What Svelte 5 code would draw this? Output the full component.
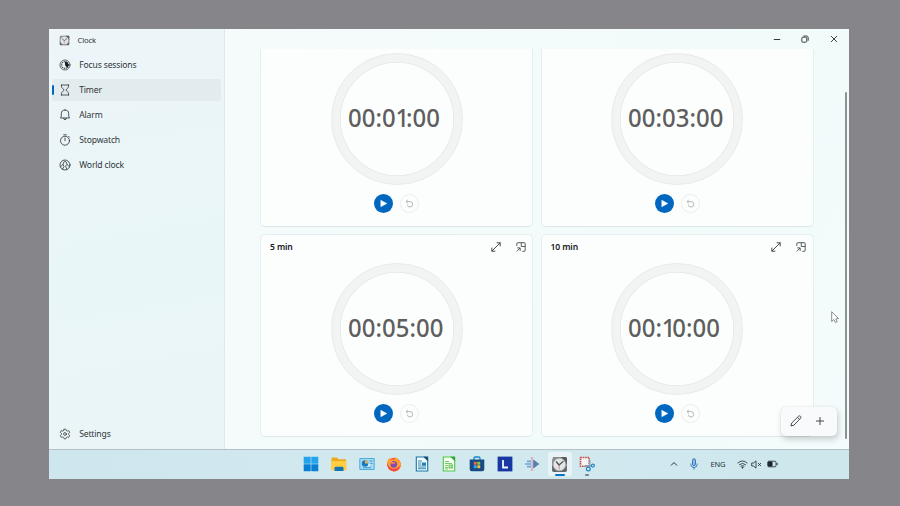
<script>
  const nav = [
    { id: 'focus', label: 'Focus sessions' },
    { id: 'timer', label: 'Timer', active: true },
    { id: 'alarm', label: 'Alarm' },
    { id: 'stopwatch', label: 'Stopwatch' },
    { id: 'world', label: 'World clock' }
  ];
  // The first row is scrolled under the title bar, so only its dials are visible.
  const timers = [
    { time: '00:01:00' },
    { time: '00:03:00' },
    { name: '5 min', time: '00:05:00' },
    { name: '10 min', time: '00:10:00' }
  ];
  const apps = ['start', 'files', 'panel', 'firefox', 'writer', 'calc', 'store', 'l', 'flow', 'clock', 'snip'];
</script>

{#snippet clockApp(size)}
  <svg width={size} height={size} viewBox="0 0 16 16" fill="none">
    <path d="M2 1h11.500q1.500 0 1.500 1.500V9H1V4z" fill="#85898c" />
    <path d="M9.500 1h4q1.500 0 1.500 1.500V8z" fill="#55595c" />
    <path d="M1 9h14v4.500q0 1.500-1.500 1.500h-11Q1 15 1 13.500z" fill="#62676b" />
    <circle cx="7.900" cy="8" r="5.900" fill="#e3e5e6" stroke="#a3a6a8" stroke-width=".8" />
    <path d="M4.800 5.200 7.600 8.500 11.700 4.800" stroke="#4c5154" stroke-width="1.200" />
    <path d="M7.700 8.300v4.300" stroke="#b98078" stroke-width=".8" />
  </svg>
{/snippet}

{#snippet navIcon(id)}
  <svg width="12" height="12" viewBox="0 0 12 12" fill="none" stroke="#30363a" stroke-width=".85" stroke-linecap="round" stroke-linejoin="round">
    {#if id === 'focus'}
      <circle cx="6" cy="6" r="5" stroke-width=".75" />
      <circle cx="6" cy="6" r="3.400" stroke-dasharray=".9 .9" stroke-linecap="butt" stroke-width="1.300" />
      <path d="M6 2.400A3.600 3.600 0 0 1 8 9L6 6z" fill="#1b2024" stroke="none" />
    {:else if id === 'timer'}
      <path d="M2.300 1h7.400M2.300 11h7.400M2.500 1v1.800c0 1.300 2.500 2.200 2.500 3.200S2.500 7.900 2.500 9.200V11M9.500 1v1.800C9.500 4.100 7 5 7 6s2.500 1.900 2.500 3.200V11" stroke-width=".8" />
    {:else if id === 'alarm'}
      <path d="M6 1a3.700 3.700 0 0 0-3.700 3.700v2.500L1.500 9h9l-.8-1.800V4.700A3.700 3.700 0 0 0 6 1zM4.700 9.200a1.300 1.500 0 0 0 2.600 0" />
    {:else if id === 'stopwatch'}
      <circle cx="6" cy="6.700" r="4.500" /><path d="M6 4v2.700M4.700.8h2.600M9.700 2.300l.7.700" />
    {:else if id === 'world'}
      <circle cx="6" cy="6" r="5" /><path d="M1.500 7.800 4 5.500 4.800 3q1.200-1.300 2.400 0L8 5.500l2.500 2.300M4 5.500l1 2-1.500 2.800M8 5.500 6.500 7l1.300 3.300" stroke-width=".8" />
    {:else}
      <path d="M5.100 1.200h1.800l.4 1.300 1.100.6 1.400-.4.900 1.600-1 1v1.400l1 1-.9 1.600-1.400-.4-1.100.6-.4 1.300H5.100l-.4-1.300-1.100-.6-1.400.4-.9-1.600 1-1V5.300l-1-1 .9-1.600 1.400.4 1.100-.6z" stroke-width=".75" />
      <circle cx="6" cy="6" r="1.400" stroke-width=".75" />
    {/if}
  </svg>
{/snippet}

<div class="screen">
  <div class="desktop">
    <div class="window">
      <aside>
        <div class="brand">{@render clockApp(11)}<span>Clock</span></div>
        <nav>
          {#each nav as item}
            <div class="item" class:active={item.active}>
              {@render navIcon(item.id)}<span>{item.label}</span>
            </div>
          {/each}
        </nav>
        <div class="item settings">{@render navIcon('settings')}<span>Settings</span></div>
      </aside>
      <main>
        <header>
          <svg width="8" height="8" viewBox="0 0 8 8"><path d="M.8 4.500h6.400" stroke="#33383b" stroke-width="1" /></svg>
          <svg width="8" height="8" viewBox="0 0 8 8" fill="none" stroke="#33383b" stroke-width=".95"><rect x=".8" y="2.200" width="5" height="5" rx="1" /><path d="M2.500 1h3c1 0 1.700.7 1.700 1.700v3" /></svg>
          <svg width="8" height="8" viewBox="0 0 8 8"><path d="M1 1l6 6M7 1 1 7" stroke="#33383b" stroke-width=".95" /></svg>
        </header>
        <div class="scroll">
          <div class="grid">
            {#each timers as t}
              <section class="card">
                <div class="top">
                  {#if t.name}
                    <h2>{t.name}</h2>
                    <svg width="10" height="10" viewBox="0 0 10 10" fill="none" stroke="#33383b" stroke-width=".9"><path d="M.8 9.200 9.200.8M5.700.8h3.500v3.500M4.300 9.200H.8V5.700" /></svg>
                    <svg width="10" height="10" viewBox="0 0 10 10" fill="none" stroke="#3c4144" stroke-width=".85"><path d="M.8 4V1.700Q.8.700 1.800.7h6.400q1 0 1 1v6.600q0 1-1 1H6.300M5.300.8v3.700h3.900M.7 9.400l3.300-3.300M1.200 5.900h3v3" /></svg>
                  {/if}
                </div>
                <div class="ring">
                  <div class="time">{#each t.time as ch}<span class:one={ch === '1'} class:colon={ch === ':'}>{ch}</span>{/each}</div>
                </div>
                <div class="actions">
                  <div class="play"><svg width="9" height="9" viewBox="0 0 9 9"><path d="M1.800 1.300v6.400L7.800 4.500z" fill="#fff" stroke="#fff" stroke-width=".5" stroke-linejoin="round" /></svg></div>
                  <div class="reset"><svg width="9" height="9" viewBox="0 0 9 9" fill="none" stroke="#a3a6a7" stroke-width=".8"><path d="M2.800.9 1 2.600l1.800 1.700M1.100 2.600h3.900a2.700 2.700 0 1 1-2.700 3.100" /></svg></div>
                </div>
              </section>
            {/each}
          </div>
        </div>
      </main>
      <div class="scrollbar"></div>
      <div class="fab">
        <svg width="12" height="12" viewBox="0 0 12 12" fill="none" stroke="#33383b" stroke-width=".9" stroke-linejoin="round"><path d="M1 11l.7-3L8.500 1.300c.6-.6 1.500-.5 2 0s.6 1.400 0 2L3.900 10.200zM7.500 2.300l2.100 2.100" /></svg>
        <svg width="10" height="10" viewBox="0 0 10 10"><path d="M5 1v8M1 5h8" stroke="#33383b" stroke-width=".9" /></svg>
      </div>
      <svg class="cursor" width="8" height="13" viewBox="0 0 8 13"><path d="M.7.700v9.800l2.200-2 1.500 3 1.800-.8-1.400-2.900 2.700-.3z" fill="#fff" stroke="#646a6d" stroke-width=".75" stroke-linejoin="round" /></svg>
    </div>

    <footer>
      <div class="apps">
        {#each apps as a}
          <div class="slot" class:on={a === 'clock'}>
            {#if a === 'clock'}
              {@render clockApp(17)}
            {:else}
              <svg width="16" height="16" viewBox="0 0 16 16" fill="none">
                {#if a === 'start'}
                  <path d="M.7.700h7v7h-7zM8.300.700h7v7h-7z" fill="#24a4ea" /><path d="M.7 8.300h7v7h-7zM8.300 8.300h7v7h-7z" fill="#087fd2" />
                {:else if a === 'files'}
                  <path d="M.5 2.500q0-1 1-1H6l1.500 1.800H14q1 0 1 1V14H.5z" fill="#eea91d" /><path d="M.5 5h15v8.500q0 1-1 1h-13q-1 0-1-1z" fill="#ffce45" /><path d="M3.500 15v-3q0-1.200 1.200-1.200h6.600q1.200 0 1.200 1.200v3z" fill="#1474b8" />
                {:else if a === 'panel'}
                  <rect x=".3" y="2" width="15.400" height="12" rx="1" fill="#4bacd5" /><rect x="1.300" y="3" width="13.400" height="10" fill="#a3daf3" /><circle cx="6" cy="7.400" r="3.200" fill="#1779c5" /><path d="M6 7.400V4.200a3.200 3.200 0 0 1 3.200 3.200z" fill="#f1b04c" /><path d="M10.500 5h3M11 7.500h2.500M4 11.700h8" stroke="#4297ce" /><path d="m9 10.500 2-3" stroke="#fff" />
                {:else if a === 'firefox'}
                  <circle cx="8" cy="8.500" r="6.800" fill="#f45a35" /><path d="M1 7C1.300 4.500 2.500 3 3.600 2l.8 1.800C6 3 7.500 3.500 8.500 4.300L9 1c2 1 3 2.500 3.500 4l1-.8c3 5.500.5 10-3.500 11-5 1.500-8.800-2.700-9-8.200z" fill="#ffa12c" /><path d="M1.200 6.500c1 4 3.700 7 8 6.200 2-.4 4-1.500 5.300-3.500-.8 4.500-4 6.300-6.700 6.100-4-.3-7-3.700-6.600-8.800z" fill="#f44350" /><circle cx="7.800" cy="8.400" r="3.300" fill="#8649b9" /><path d="M3.500 6.800c2-.9 3.500.8 5.500-.2" stroke="#ff9838" stroke-width="1.500" />
                {:else if a === 'writer'}
                  <path d="M2.300 1h8l3.400 3.400V15H2.300z" fill="#f1f9fd" stroke="#1976a6" stroke-width="1.100" /><path d="M9.500.5h4.700v4.700z" fill="#124e79" /><path d="M4 5h4M4 7h3M4 9h3M4 12.700h8M4 11h8" stroke="#257ba6" stroke-width=".9" /><path d="M7.800 6.500h4.200v3.300H7.800z" fill="#2382b7" />
                {:else if a === 'calc'}
                  <path d="M2.300 1h8l3.400 3.400V15H2.300z" fill="#f5fff2" stroke="#53c746" stroke-width="1.100" /><path d="M9.500.5h4.700v4.700z" fill="#32a633" /><path d="M4 5.500h4M4 7.500h7M4 9.500h3M4 11.500h3M4 13h3" stroke="#63c756" stroke-width=".9" /><path d="M7.500 8.500h4.500v4H7.500z" fill="#66c756" /><path d="M7.500 10.500H12M9.700 8.500v4" stroke="#d8f4d0" stroke-width=".5" />
                {:else if a === 'store'}
                  <path d="M5 4V2.300Q5 1 6.300 1h3.400Q11 1 11 2.300V4" stroke="#178acb" stroke-width="1.300" /><path d="M.7 3.500h14.600v9.800q0 2-2 2H2.700q-2 0-2-2z" fill="#174a85" /><path d="M4.800 5.800h2.900v2.900H4.800z" fill="#f2694a" /><path d="M8.300 5.800h2.900v2.900H8.300z" fill="#88c84a" /><path d="M4.800 9.300h2.900v2.900H4.800z" fill="#35acec" /><path d="M8.300 9.300h2.900v2.900H8.300z" fill="#fac42d" />
                {:else if a === 'l'}
                  <rect x=".6" y=".6" width="14.800" height="14.800" fill="#1837a2" /><path d="M6 4v7.500h5" stroke="#f1f5ff" stroke-width="1.800" />
                {:else if a === 'flow'}
                  <path d="M3 5.300h4M1 8h6M3 10.700h4" stroke="#6ea4d8" stroke-width="1.700" /><path d="M9.600 4v8l5.200-4z" fill="#5581ab" stroke="#5581ab" stroke-width=".8" stroke-linejoin="round" /><path d="M8 2v12M6.800 2h2.400M6.800 14h2.400" stroke="#e0919f" />
                {:else}
                  <path d="M1.500 1.500h8.700v8.700H1.500z" fill="#f3f5f7" stroke="#c8504b" stroke-width="1.600" stroke-dasharray="1.600 .7" /><path d="M10.700 4v6.700M6 9.800h7" stroke="#8ba2b2" stroke-width="1.500" /><circle cx="9.300" cy="13" r="1.900" stroke="#2287c6" stroke-width="1.200" /><circle cx="13.900" cy="9.600" r="1.500" stroke="#2287c6" stroke-width="1.200" />
                {/if}
              </svg>
            {/if}
            {#if a === 'clock' || a === 'snip'}<i class="mark" class:wide={a === 'clock'}></i>{/if}
          </div>
        {/each}
      </div>
      <div class="tray">
        <svg width="8" height="8" viewBox="0 0 8 8" fill="none"><path d="M1 5.500 4 2.500l3 3" stroke="#25333a" /></svg>
        <svg class="mic" width="8" height="12" viewBox="0 0 8 12" fill="none" stroke="#2b6eb5" stroke-width=".9"><rect x="2.500" y=".8" width="3" height="6.800" rx="1.500" fill="#8bbbe3" /><path d="M.8 5.500v.8a3.200 3.200 0 0 0 6.400 0v-.8M4 9.500v2" /></svg>
        <span class="lang">ENG</span>
        <svg class="wifi" width="11" height="9" viewBox="0 0 11 9" fill="none" stroke="#25333a" stroke-width=".85"><path d="M.6 3.200q4.900-4.400 9.800 0M2.100 4.900q3.400-3 6.800 0M3.600 6.400q1.900-1.600 3.800 0" /><circle cx="5.500" cy="7.600" r=".6" fill="#25333a" /></svg>
        <svg class="sound" width="11" height="9" viewBox="0 0 11 9" fill="none" stroke="#25333a" stroke-width=".85"><path d="M.7 3h1.800L5 .9v7.200L2.500 6H.7zM7 3l3 3M10 3 7 6" /></svg>
        <svg class="battery" width="11" height="8" viewBox="0 0 11 8" fill="none" stroke="#18262c" stroke-width=".85"><rect x=".7" y="1.200" width="8.300" height="5.600" rx="1.200" /><path d="M1.500 2h3.600v4H1.500z" fill="#18262c" /><path d="M10.200 3v2" stroke-width="1" /></svg>
      </div>
    </footer>
  </div>
</div>

<style>
  :global(body) { margin: 0; overflow: hidden; }
  .screen { width: 900px; height: 506px; box-sizing: border-box; padding: 29px 51px 27px 49px; background: #86868a; font-family: "Noto Sans", "Open Sans", sans-serif; color: #30363a; }
  .desktop { display: flex; flex-direction: column; width: 800px; height: 450px; overflow: hidden; }
  .window { position: relative; display: flex; height: 420px; background: linear-gradient(115deg, #f7fafc 0%, #f4fbfb 40%, #f1fbfa 75%, #f4fbfc 100%); }
  svg { display: block; flex: none; }
  aside { display: flex; flex-direction: column; box-sizing: border-box; width: 176px; border-right: 1px solid #e0e9eb; background: linear-gradient(170deg, #edf5f9, #e9f6f8 55%, #ebf5f8); }
  .brand { display: flex; align-items: center; height: 22px; padding-left: 9.500px; gap: 8px; font-size: 7.700px; letter-spacing: -.17px; }
  nav { display: flex; flex-direction: column; gap: 3px; padding-top: 2.500px; }
  .item { position: relative; display: flex; align-items: center; box-sizing: border-box; height: 22px; width: 169px; margin-left: 3px; padding-left: 6.500px; gap: 8.700px; border-radius: 3px; font-size: 8.600px; letter-spacing: -.16px; }
  .item.active { background: #e2ebed; }
  .item.active::before { content: ''; position: absolute; left: 0; top: 6px; width: 2px; height: 10px; border-radius: 1px; background: #0067c0; }
  .settings { margin-top: auto; margin-bottom: 4px; }
  main { flex: 1; display: flex; flex-direction: column; min-width: 0; }
  header { display: flex; justify-content: flex-end; align-items: center; height: 20px; padding-right: 11px; gap: 20.700px; flex: none; }
  .scroll { flex: 1; overflow: hidden; }
  .grid { display: grid; grid-template-columns: 273px 273px; grid-auto-rows: 202.500px; gap: 7.500px 7.500px; margin-top: -24.700px; padding-left: 35px; }
  .card { box-sizing: border-box; display: flex; flex-direction: column; align-items: center; border: 1px solid #e6eeef; border-bottom-color: #dde7e8; border-radius: 5px; background: #fcfefd; }
  .top { display: flex; align-items: center; align-self: stretch; height: 23px; padding: 0 6.200px 0 9px; gap: 15px; }
  h2 { flex: 1; margin: 0; font-size: 8.600px; font-weight: 600; color: #171a1c; letter-spacing: -.12px; line-height: 12px; }
  .ring { display: flex; align-items: center; box-sizing: border-box; width: 132px; height: 132px; margin-top: 5px; border-radius: 50%; border: 1px solid #e9ebeb; background: radial-gradient(circle closest-side, #fcfefd 0 56px, #e9ebeb 56.500px 57px, #f2f4f4 57.500px); flex: none; }
  .time { display: flex; width: max-content; margin: -4px 0 0 16.200px; font-size: 26px; line-height: 30px; font-weight: 500; color: #5e5e5e; transform: scaleX(.92); transform-origin: left; }
  .time span { width: 14.900px; text-align: center; }
  .time .colon { width: 7.200px; }
  .time .one { width: 11.200px; text-indent: -.2px; }
  .actions { display: flex; gap: 7px; margin-top: 8.500px; }
  .play, .reset { display: flex; align-items: center; justify-content: center; box-sizing: border-box; width: 19px; height: 19px; border-radius: 50%; }
  .play { background: #0067c0; }
  .reset { border: 1px solid #eceeee; background: #fcfdfd; }
  .scrollbar { position: absolute; right: 2px; top: 63px; width: 2px; height: 347px; border-radius: 1px; background: #8b9293; }
  .fab { position: absolute; left: 731.500px; top: 377.500px; width: 56px; height: 29px; display: flex; align-items: center; justify-content: space-between; box-sizing: border-box; padding: 0 12px 0 9px; border-radius: 5px; background: #f9fafc; box-shadow: 0 0 1px #c8cecf, 1px 3px 6px rgba(0, 0, 0, .2); }
  .cursor { position: absolute; left: 782px; top: 282px; }
  footer { position: relative; height: 30px; box-sizing: border-box; border-top: 1px solid #b3c0c5; background: linear-gradient(90deg, #cee6ee, #d3e9f0 50%, #cde7ed); }
  .apps { display: flex; align-items: center; height: 28px; padding-left: 248.700px; }
  .slot { position: relative; display: flex; align-items: center; justify-content: center; width: 27.600px; height: 24px; flex: none; }
  .slot.on { background: #e7f3f7; border-radius: 3px; width: 23.600px; margin: 0 2px; }
  .mark { position: absolute; bottom: 0; width: 4px; height: 2px; border-radius: 1px; background: #76868e; }
  .mark.wide { width: 10px; background: #0875c4; }
  .tray { position: absolute; left: 621px; top: 0; height: 28px; display: flex; align-items: center; }
  .mic { margin-left: 12px; }
  .lang { width: 18px; margin-left: 12.500px; font-size: 7.500px; letter-spacing: -.15px; color: #25333a; }
  .wifi { margin-left: 8px; }
  .sound { margin-left: 3.500px; }
  .battery { margin-left: 4.500px; }
</style>
